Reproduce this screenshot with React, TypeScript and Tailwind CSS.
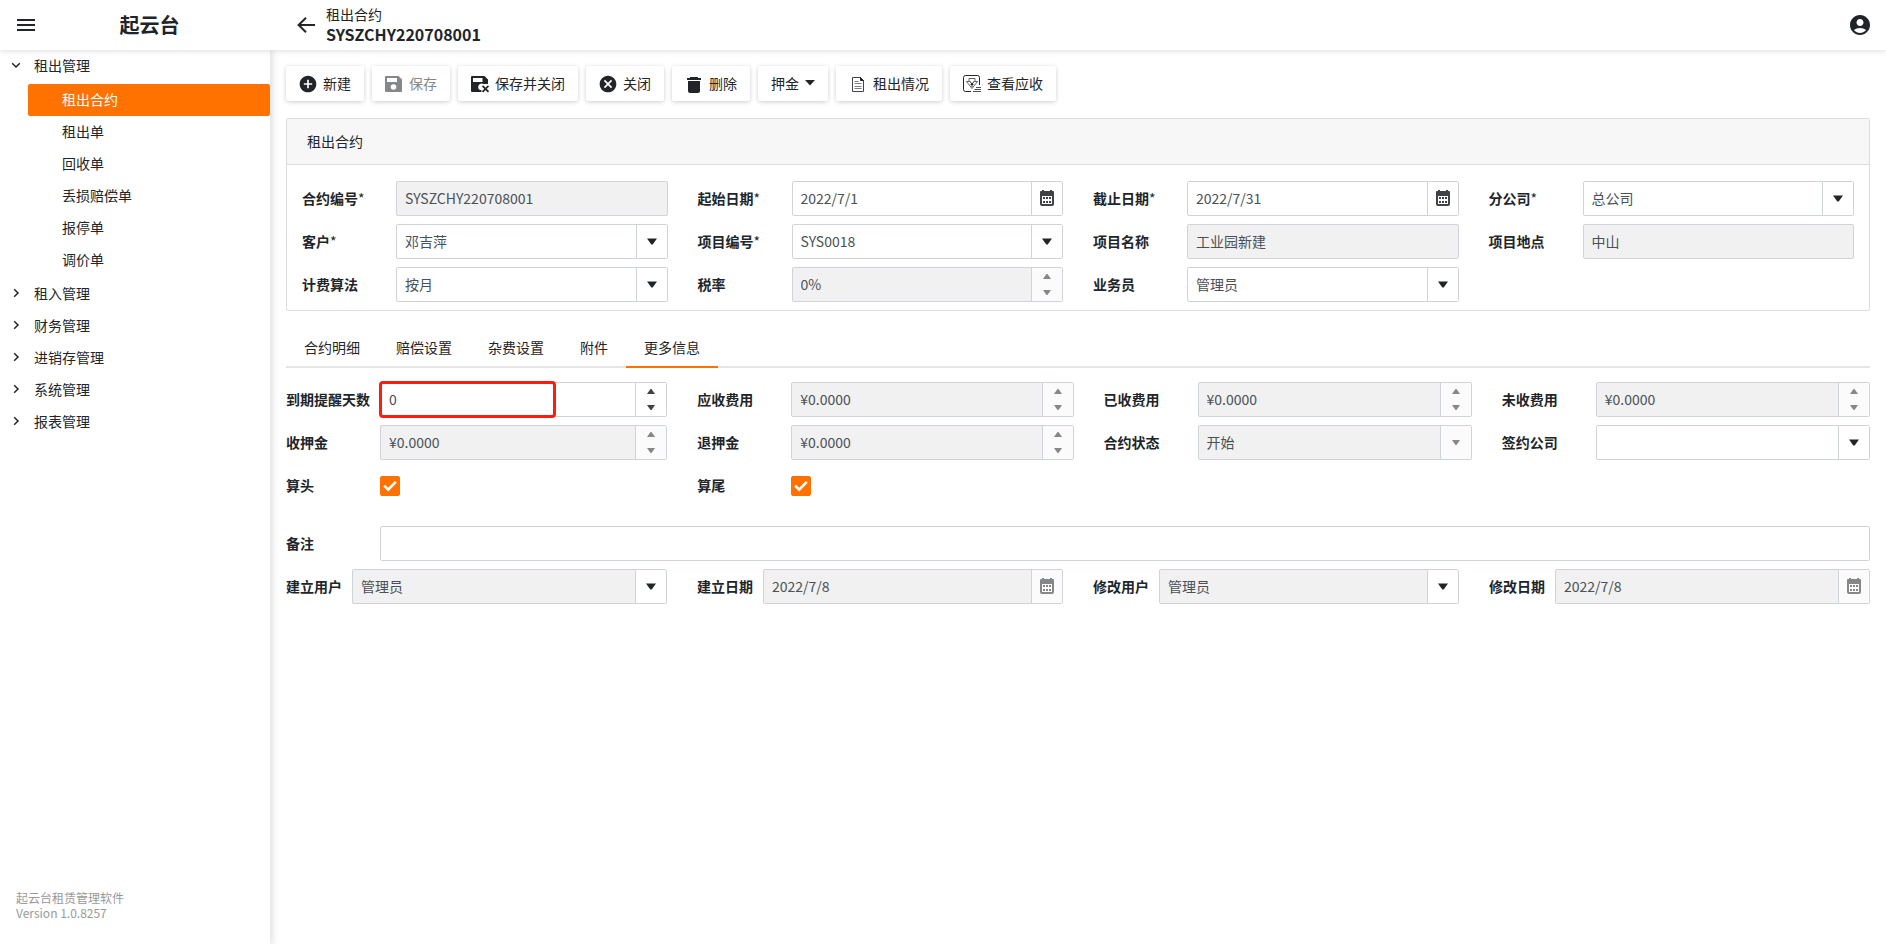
import { useId, useState } from "react";
import type { ReactNode } from "react";
import { MdAccountCircle, MdAddCircle, MdCancel } from "react-icons/md";

/* ---------- icons ---------- */

const MenuIcon = () => (
  <svg width="18" height="14" viewBox="0 0 18 14" fill="currentColor" aria-hidden="true">
    <path d="M0 1h18v2H0zM0 6h18v2H0zM0 11h18v2H0z" />
  </svg>
);

const BackIcon = () => (
  <svg width="18" height="16" viewBox="0 0 18 16" fill="none" stroke="currentColor" strokeWidth="2" aria-hidden="true">
    <path d="M18 8H2M9 .8 1.6 8 9 15.2" />
  </svg>
);

const Chevron = ({ open }: { open: boolean }) => (
  <svg width="10" height="10" viewBox="0 0 10 10" fill="none" stroke="currentColor" strokeWidth="1.5" aria-hidden="true">
    {open ? <path d="M1.2 3.2 5 7l3.8-3.8" /> : <path d="M3.2 1.2 7 5 3.2 8.8" />}
  </svg>
);

const SaveIcon = () => (
  <svg width="18" height="18" viewBox="0 0 18 18" fill="currentColor" aria-hidden="true">
    <path
      fillRule="evenodd"
      d="M1 1h12.500L17 4.500V16a1 1 0 0 1-1 1H1a1 1 0 0 1-1-1V2a1 1 0 0 1 1-1zm1 2v4h10V3zm6.500 6.200a2.800 2.800 0 1 0 0 5.600 2.800 2.800 0 0 0 0-5.600z"
    />
  </svg>
);

const SaveCloseIcon = () => (
  <svg width="18" height="18" viewBox="0 0 18 18" fill="currentColor" aria-hidden="true">
    <path
      fillRule="evenodd"
      d="M1 1h12.500L17 4.500V9h-4.500a3.500 3.500 0 0 0-5.300 3 3.300 3.300 0 0 0 3.300 3.200V17H1a1 1 0 0 1-1-1V2a1 1 0 0 1 1-1zm1 2v4h9.500V3z"
    />
    <path d="m11.500 10.800 6 6M17.500 10.800l-6 6" stroke="currentColor" strokeWidth="1.800" />
  </svg>
);

const TrashIcon = () => (
  <svg width="18" height="18" viewBox="0 0 18 18" fill="currentColor" aria-hidden="true">
    <path d="M5 2h8v1h3v2H2V3h3zM3 6h12v10a2 2 0 0 1-2 2H5a2 2 0 0 1-2-2z" />
  </svg>
);

const DocIcon = () => (
  <svg width="18" height="18" viewBox="0 0 18 18" fill="none" stroke="currentColor" strokeWidth="1" aria-hidden="true">
    <path d="M3.500 2.500h8l3 3v11h-11z" strokeOpacity=".85" />
    <path d="M11.500 2.500v3h3z" fill="currentColor" />
    <path d="M5.500 6.500h4M5.500 8.500h7M5.500 11.500h7M5.500 13.500h7" strokeOpacity=".6" />
  </svg>
);

const ReceivableIcon = () => (
  <svg width="18" height="18" viewBox="0 0 18 18" fill="none" stroke="currentColor" strokeWidth="1" aria-hidden="true">
    <path d="M8 16.500H2.500a2 2 0 0 1-2-2v-12a2 2 0 0 1 2-2h12a2 2 0 0 1 2 2V10" />
    <path d="M6 3.500h6v3h2.500L9 13.500 3.500 6.500H6z" strokeOpacity=".7" />
    <path d="m6.500 6 2.500 3 2.500-3M9 9v3M7.500 9.500h3" />
    <path d="M13 12.500h5M11.500 14.500H18M10 16.500h8" strokeOpacity=".8" />
  </svg>
);

const CalendarIcon = () => (
  <svg width="14" height="16" viewBox="0 0 14 16" fill="currentColor" aria-hidden="true">
    <path
      fillRule="evenodd"
      d="M2 0h2v1h6V0h2v1h1a1 1 0 0 1 1 1v12a2 2 0 0 1-2 2H2a2 2 0 0 1-2-2V2a1 1 0 0 1 1-1h1zM2 6v8h10V6z"
    />
    <path d="M3 7h2v2H3zM6 7h2v2H6zM9 7h2v2H9zM3 11h2v2H3zM6 11h2v2H6zM9 11h2v2H9z" />
  </svg>
);

const CaretDown = () => (
  <svg width="10" height="7" viewBox="0 0 10 7" fill="currentColor" aria-hidden="true">
    <path d="M0 .5h10L5.700 6.500H4.300z" />
  </svg>
);

const SmallCaret = ({ up = false }: { up?: boolean }) => (
  <svg width="8" height="5" viewBox="0 0 8 5" fill="currentColor" aria-hidden="true">
    {up ? <path d="M0 5h8L4.500 0h-1z" /> : <path d="M0 0h8L4.500 5h-1z" />}
  </svg>
);

/* ---------- form fields ---------- */

type Kind = "text" | "select" | "date" | "number" | "check";

interface FieldSpec {
  label: string;
  value?: string;
  kind?: Kind;
  required?: boolean;
  disabled?: boolean;
  buttonEnabled?: boolean;
  highlight?: boolean;
}

function Field({
  label,
  value = "",
  kind = "text",
  required,
  disabled = false,
  buttonEnabled,
  highlight,
  narrow,
}: FieldSpec & { narrow?: boolean }) {
  const id = useId();
  const buttonOn = buttonEnabled ?? !disabled;
  const side = buttonOn ? "bg-white" : "bg-[#fbfbfb]";
  const ink = buttonOn ? "text-[#212529]" : "text-[#858789]";
  const softInk = buttonOn ? "text-[#3f4246]" : "text-[#858789]";
  const control =
    "h-full min-w-0 flex-1 appearance-none bg-transparent px-2 pb-0.5 text-sm text-[#495057] outline-none";

  return (
    <div className="flex h-[35px] items-center">
      <label
        htmlFor={id}
        className={`shrink-0 pb-0.5 whitespace-nowrap font-bold text-[#212529] ${narrow ? "w-[66px]" : "w-[94px]"}`}
      >
        {label}
        {required && <span className="font-normal">*</span>}
      </label>
      {kind === "check" ? (
        <span className="grid">
          <input
            id={id}
            type="checkbox"
            defaultChecked
            className="peer col-start-1 row-start-1 size-5 appearance-none rounded-xs border border-[#ced4da] checked:border-[#ff7200] checked:bg-[#ff7200]"
          />
          <svg
            viewBox="0 0 20 20"
            className="pointer-events-none invisible col-start-1 row-start-1 size-5 peer-checked:visible"
            fill="none"
            stroke="#fff"
            strokeWidth="2.6"
            aria-hidden="true"
          >
            <path d="m4.200 9.600 4 4 7.600-7.800" />
          </svg>
        </span>
      ) : (
        <div
          className={`relative flex h-full min-w-0 flex-1 rounded-xs border border-[#ced4da] ${
            disabled ? "bg-[#f1f1f1]" : "bg-white"
          }`}
        >
          {kind === "select" ? (
            <select id={id} disabled={disabled} defaultValue={value} className={`${control} opacity-100`}>
              <option value={value}>{value}</option>
            </select>
          ) : (
            <input id={id} type="text" readOnly={disabled} defaultValue={value} className={control} />
          )}
          {kind === "select" && (
            <button
              type="button"
              disabled={!buttonOn}
              aria-label={`展开${label}`}
              className={`flex w-[31px] items-center justify-center border-l border-[#ced4da] ${side} ${ink}`}
            >
              {buttonOn ? <CaretDown /> : <SmallCaret />}
            </button>
          )}
          {kind === "date" && (
            <button
              type="button"
              disabled={!buttonOn}
              aria-label={`选择${label}`}
              className={`flex w-[31px] items-center justify-center border-l border-[#ced4da] pb-0.5 ${side} ${softInk}`}
            >
              <CalendarIcon />
            </button>
          )}
          {kind === "number" && (
            <span className={`flex w-[31px] flex-col border-l border-[#ced4da] ${side} ${softInk}`}>
              <button type="button" disabled={!buttonOn} aria-label={`增加${label}`} className="flex flex-1 items-center justify-center">
                <SmallCaret up />
              </button>
              <button type="button" disabled={!buttonOn} aria-label={`减少${label}`} className="flex flex-1 items-center justify-center">
                <SmallCaret />
              </button>
            </span>
          )}
          {highlight && (
            <span className="pointer-events-none absolute -top-0.5 -left-0.5 h-[37px] w-[177px] rounded-sm border-3 border-[#ff1c0f]" />
          )}
        </div>
      )}
    </div>
  );
}

/* ---------- data ---------- */

const headFields: FieldSpec[] = [
  { label: "合约编号", value: "SYSZCHY220708001", required: true, disabled: true },
  { label: "起始日期", value: "2022/7/1", kind: "date", required: true },
  { label: "截止日期", value: "2022/7/31", kind: "date", required: true },
  { label: "分公司", value: "总公司", kind: "select", required: true },
  { label: "客户", value: "邓吉萍", kind: "select", required: true },
  { label: "项目编号", value: "SYS0018", kind: "select", required: true },
  { label: "项目名称", value: "工业园新建", disabled: true },
  { label: "项目地点", value: "中山", disabled: true },
  { label: "计费算法", value: "按月", kind: "select" },
  { label: "税率", value: "0%", kind: "number", disabled: true },
  { label: "业务员", value: "管理员", kind: "select" },
];

const moreFields: FieldSpec[] = [
  { label: "到期提醒天数", value: "0", kind: "number", highlight: true },
  { label: "应收费用", value: "¥0.0000", kind: "number", disabled: true },
  { label: "已收费用", value: "¥0.0000", kind: "number", disabled: true },
  { label: "未收费用", value: "¥0.0000", kind: "number", disabled: true },
  { label: "收押金", value: "¥0.0000", kind: "number", disabled: true },
  { label: "退押金", value: "¥0.0000", kind: "number", disabled: true },
  { label: "合约状态", value: "开始", kind: "select", disabled: true },
  { label: "签约公司", value: "", kind: "select" },
  { label: "算头", kind: "check" },
  { label: "算尾", kind: "check" },
];

const auditFields: FieldSpec[] = [
  { label: "建立用户", value: "管理员", kind: "select", disabled: true, buttonEnabled: true },
  { label: "建立日期", value: "2022/7/8", kind: "date", disabled: true },
  { label: "修改用户", value: "管理员", kind: "select", disabled: true, buttonEnabled: true },
  { label: "修改日期", value: "2022/7/8", kind: "date", disabled: true },
];

const leaseItems = ["租出合约", "租出单", "回收单", "丢损赔偿单", "报停单", "调价单"];
const otherGroups = ["租入管理", "财务管理", "进销存管理", "系统管理", "报表管理"];
const tabs = ["合约明细", "赔偿设置", "杂费设置", "附件", "更多信息"];

/* ---------- layout pieces ---------- */

function ToolButton({ icon, children, disabled }: { icon?: ReactNode; children: ReactNode; disabled?: boolean }) {
  return (
    <button
      type="button"
      disabled={disabled}
      className="flex h-[35px] items-center gap-1.5 rounded-xs bg-white px-[13px] whitespace-nowrap shadow-[0_1px_4px_rgba(0,0,0,0.2)] disabled:text-[#858789]"
    >
      {icon}
      <span className="flex items-center gap-1.5 pb-0.5">{children}</span>
    </button>
  );
}

function GroupButton({ label, open = false }: { label: string; open?: boolean }) {
  return (
    <button
      type="button"
      aria-expanded={open}
      className="flex h-8 w-full items-center gap-[13px] pb-0.5 pl-[11px] text-left"
    >
      <Chevron open={open} />
      {label}
    </button>
  );
}

export default function App() {
  const [activeTab, setActiveTab] = useState("更多信息");

  return (
    <div className="flex min-h-screen flex-col bg-white font-['Noto_Sans_CJK_SC',sans-serif] text-sm leading-5 text-[#212529]">
      <header className="relative z-10 flex h-[50px] shrink-0 items-center bg-white shadow-[0_1px_6px_rgba(0,0,0,0.14)]">
        <div className="flex w-[270px] shrink-0 items-center pl-[17px]">
          <button type="button" aria-label="菜单">
            <MenuIcon />
          </button>
          <span className="flex-1 pr-1.5 text-center text-xl leading-7 font-bold">起云台</span>
        </div>
        <button type="button" aria-label="返回" className="ml-[27px]">
          <BackIcon />
        </button>
        <div className="ml-[11px] flex-1 pb-0.5">
          <div className="leading-5">租出合约</div>
          <h1 className="text-base leading-5 font-bold">SYSZCHY220708001</h1>
        </div>
        <button type="button" aria-label="用户" className="mr-[14px]">
          <MdAccountCircle className="size-6" />
        </button>
      </header>

      <div className="flex flex-1">
        <aside className="flex w-[270px] shrink-0 flex-col shadow-[2px_0_7px_rgba(0,0,0,0.14)]">
          <nav>
            <GroupButton label="租出管理" open />
            <ul className="my-0.5 pl-7">
              {leaseItems.map((item, i) => (
                <li key={item}>
                  <a
                    href="#"
                    className={`flex h-8 items-center rounded-xs pb-0.5 pl-[34px] ${i === 0 ? "bg-[#ff7200] text-white" : ""}`}
                  >
                    {item}
                  </a>
                </li>
              ))}
            </ul>
            {otherGroups.map((g) => (
              <GroupButton key={g} label={g} />
            ))}
          </nav>
          <footer className="mt-auto px-4 pb-6 text-xs leading-[15px] text-[#999]">
            <p>起云台租赁管理软件</p>
            <p>Version 1.0.8257</p>
          </footer>
        </aside>

        <main className="min-w-0 flex-1 p-4">
          <div className="flex flex-wrap gap-2">
            <ToolButton icon={<MdAddCircle className="-mx-px size-5" />}>新建</ToolButton>
            <ToolButton icon={<SaveIcon />} disabled>
              保存
            </ToolButton>
            <ToolButton icon={<SaveCloseIcon />}>保存并关闭</ToolButton>
            <ToolButton icon={<MdCancel className="-mx-px size-5" />}>关闭</ToolButton>
            <ToolButton icon={<TrashIcon />}>删除</ToolButton>
            <ToolButton>
              押金
              <svg width="10" height="6" viewBox="0 0 10 6" fill="currentColor" aria-hidden="true">
                <path d="M0 0h10L5 5.500z" />
              </svg>
            </ToolButton>
            <ToolButton icon={<DocIcon />}>租出情况</ToolButton>
            <ToolButton icon={<ReceivableIcon />}>查看应收</ToolButton>
          </div>

          <section className="mt-[17px] rounded-xs border border-[#dcdcdc]">
            <h2 className="flex h-[46px] items-center border-b border-[#dcdcdc] bg-[#f7f7f7] px-5 pb-0.5">租出合约</h2>
            <div className="grid grid-cols-4 gap-x-[30px] gap-y-2 px-[15px] pt-4 pb-2">
              {headFields.map((f) => (
                <Field key={f.label} {...f} />
              ))}
            </div>
          </section>

          <div role="tablist" className="mt-[19px] flex border-b-2 border-[#e5e5e5]">
            {tabs.map((t) => (
              <button
                key={t}
                type="button"
                role="tab"
                aria-selected={t === activeTab}
                onClick={() => setActiveTab(t)}
                className={`-mb-0.5 h-[38px] border-b-2 px-[18px] pb-0.5 ${
                  t === activeTab ? "border-[#ff7200]" : "border-transparent"
                }`}
              >
                {t}
              </button>
            ))}
          </div>

          <div className="mt-[14px] grid grid-cols-[381fr_376fr_368fr_368fr] gap-x-[30px] gap-y-2">
            {moreFields.map((f) => (
              <Field key={f.label} {...f} />
            ))}
          </div>
          <div className="mt-[23px]">
            <Field label="备注" />
          </div>
          <div className="mt-2 grid grid-cols-[381fr_366fr_366fr_381fr] gap-x-[30px]">
            {auditFields.map((f) => (
              <Field key={f.label} {...f} narrow />
            ))}
          </div>
        </main>
      </div>
    </div>
  );
}
